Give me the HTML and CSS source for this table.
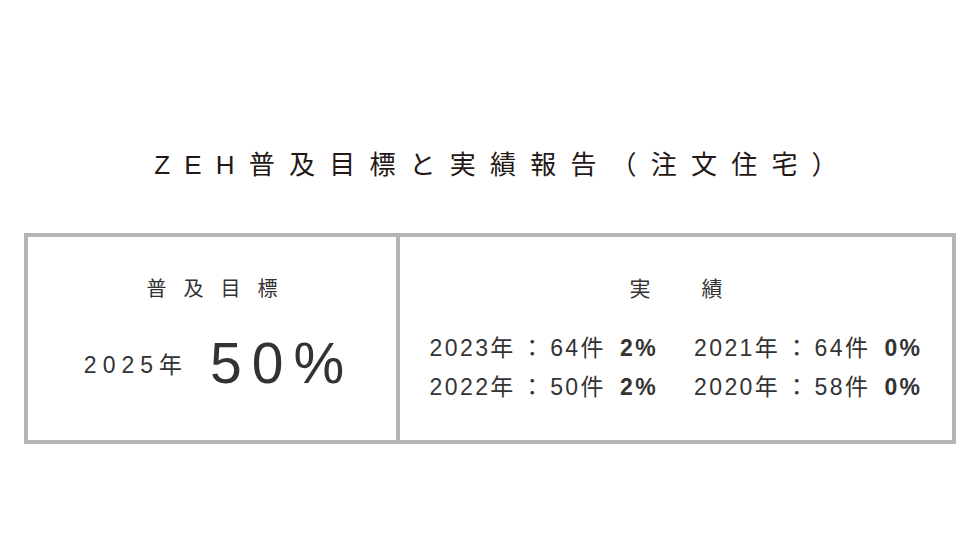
FILE: index.html
```html
<!DOCTYPE html>
<html lang="ja">
<head>
<meta charset="utf-8">
<link rel="stylesheet" href="styles.css">
</head>
<body>
<main class="page">
  <h1 class="title">ZEH普及目標と実績報告（注文住宅）</h1>
  <section class="board">
    <div class="cell cell-goal">
      <h2 class="cell-head goal-head">普及目標</h2>
      <div class="goal-row">
        <span class="goal-year">2025年</span>
        <span class="goal-value">50%</span>
      </div>
    </div>
    <div class="cell cell-result">
      <h2 class="cell-head result-head">実績</h2>
      <div class="result-grid">
        <p class="result-item">2023年<span class="sep">：</span>64件<b class="rate">2%</b></p>
        <p class="result-item">2021年<span class="sep">：</span>64件<b class="rate">0%</b></p>
        <p class="result-item">2022年<span class="sep">：</span>50件<b class="rate">2%</b></p>
        <p class="result-item">2020年<span class="sep">：</span>58件<b class="rate">0%</b></p>
      </div>
    </div>
  </section>
</main>
</body>
</html>
```
FILE: styles.css
```css
* { box-sizing: border-box; }
html, body { margin: 0; padding: 0; background: #fff; }
body {
  font-family: "Liberation Sans", "Noto Sans CJK JP", sans-serif;
  color: #2b2624;
}
.page { padding-top: 148px; }
.title {
  margin: 0;
  text-align: center;
  font-size: 26px;
  font-weight: 400;
  line-height: 34px;
  letter-spacing: 14.2px;
  padding-left: 26px;
  color: #231815;
}
.board {
  margin: 51px 24px 0;
  height: 211px;
  border: 4px solid #b5b5b5;
  display: grid;
  grid-template-columns: 372px 1fr;
}
.cell {
  display: flex;
  flex-direction: column;
  align-items: center;
}
.cell-goal { border-right: 4px solid #b5b5b5; }
.cell-head {
  margin: 38px 0 0;
  font-size: 20px;
  font-weight: 400;
  line-height: 28px;
  color: #333;
}
.goal-head { letter-spacing: 17px; padding-left: 17px; }
.result-head { font-size: 21px; letter-spacing: 51px; padding-left: 51px; }
.goal-row {
  margin-top: 30px;
  padding-left: 14px;
  display: flex;
  align-items: center;
  gap: 22px;
}
.goal-year {
  font-size: 23px;
  letter-spacing: 6px;
  color: #333;
}
.goal-value {
  font-size: 57px;
  font-weight: 400;
  line-height: 60px;
  letter-spacing: 10px;
  color: #333;
}
.result-grid {
  margin-top: 30px;
  display: grid;
  grid-template-columns: auto auto;
  column-gap: 36px;
  row-gap: 9px;
}
.result-item {
  margin: 0;
  font-size: 23px;
  line-height: 30px;
  letter-spacing: 2.4px;
  color: #333;
  white-space: nowrap;
}
.sep { margin: 0 4px 0 5px; }
.rate { font-weight: 700; margin-left: 14px; }
```
